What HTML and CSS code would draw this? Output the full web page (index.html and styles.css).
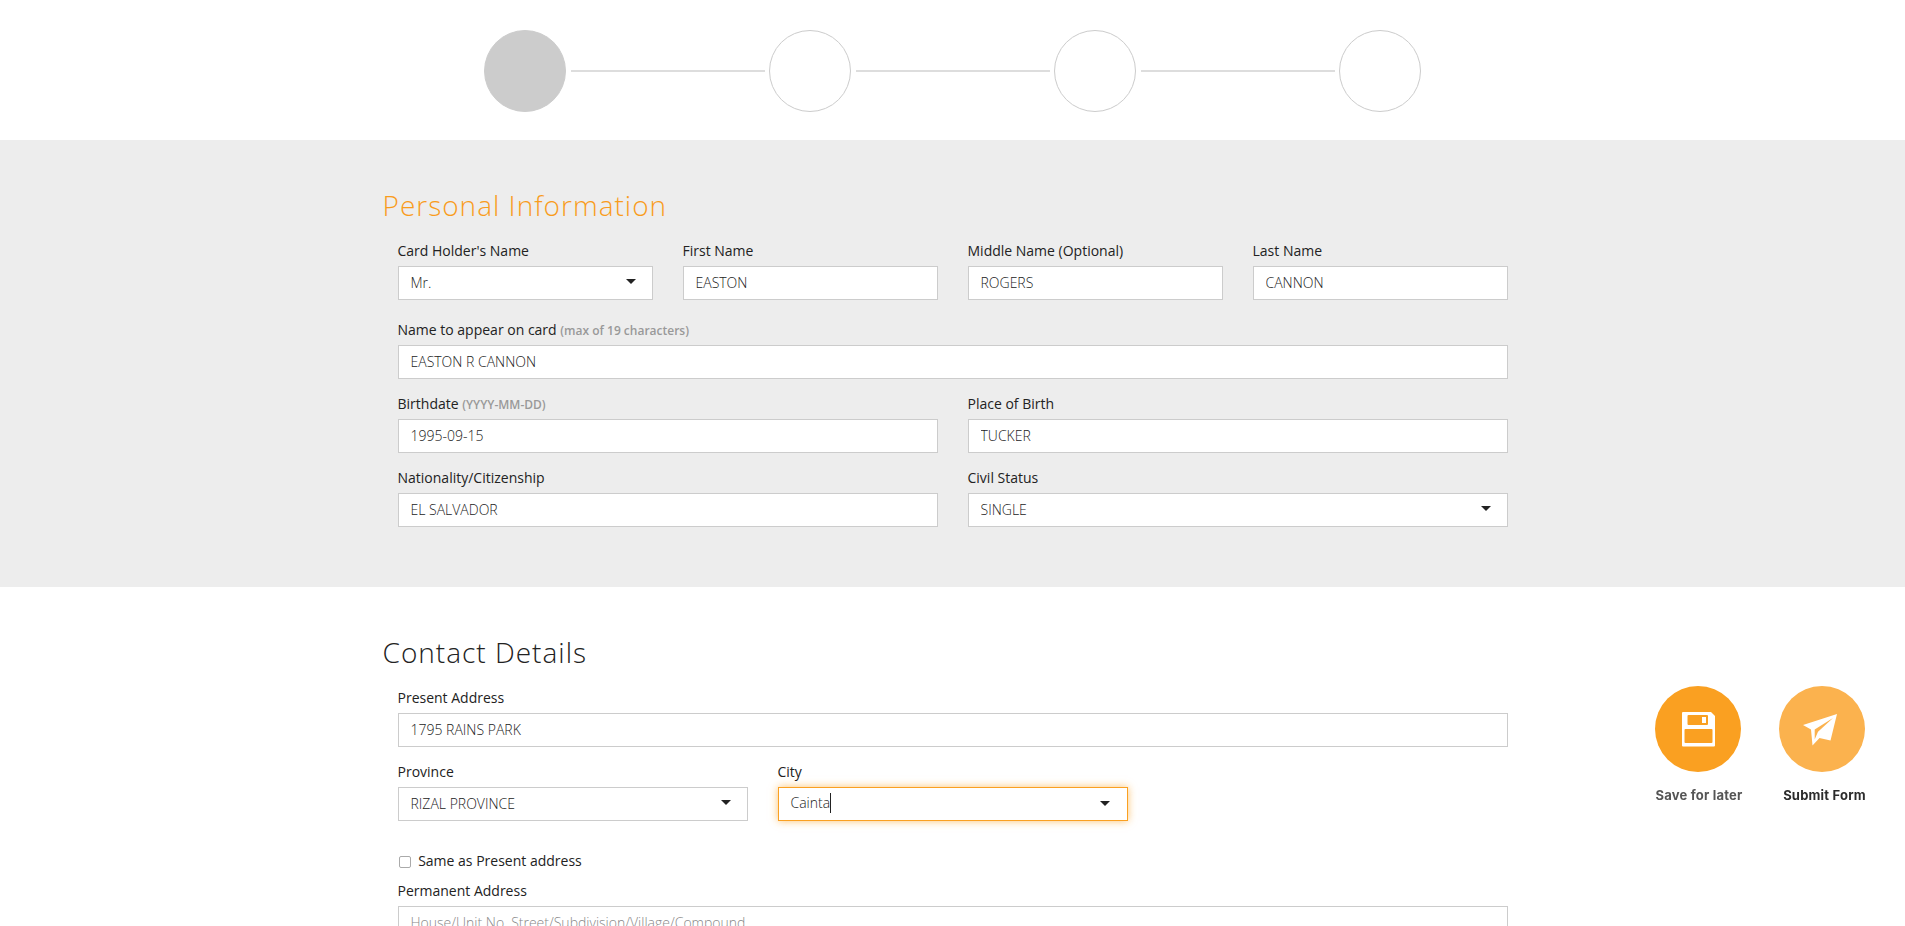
FILE: index.html
```html
<!DOCTYPE html>
<html lang="en">
<head>
  <meta charset="UTF-8">
  <meta name="viewport" content="width=device-width, initial-scale=1.0">
  <title>Card Application</title>
  <link rel="stylesheet" href="styles.css">
</head>
<body>
  <div class="stepper">
    <span class="step step-active"></span>
    <span class="step-line"></span>
    <span class="step"></span>
    <span class="step-line"></span>
    <span class="step"></span>
    <span class="step-line"></span>
    <span class="step"></span>
  </div>

  <section class="band band-grey">
    <div class="container">
      <h2 class="title title-orange">Personal Information</h2>
      <div class="row row-4">
        <div class="field">
          <label>Card Holder's Name</label>
          <div class="select"><select><option>Mr.</option></select></div>
        </div>
        <div class="field">
          <label>First Name</label>
          <input type="text" value="EASTON">
        </div>
        <div class="field">
          <label>Middle Name (Optional)</label>
          <input type="text" value="ROGERS">
        </div>
        <div class="field">
          <label>Last Name</label>
          <input type="text" value="CANNON">
        </div>
      </div>
      <div class="row row-name">
        <div class="field">
          <label>Name to appear on card <small>(max of 19 characters)</small></label>
          <input type="text" value="EASTON R CANNON">
        </div>
      </div>
      <div class="row row-2">
        <div class="field">
          <label>Birthdate <small>(YYYY-MM-DD)</small></label>
          <input type="text" value="1995-09-15">
        </div>
        <div class="field">
          <label>Place of Birth</label>
          <input type="text" value="TUCKER">
        </div>
      </div>
      <div class="row row-2">
        <div class="field">
          <label>Nationality/Citizenship</label>
          <input type="text" value="EL SALVADOR">
        </div>
        <div class="field">
          <label>Civil Status</label>
          <div class="select"><select><option>SINGLE</option></select></div>
        </div>
      </div>
    </div>
  </section>

  <section class="band band-white">
    <div class="container">
      <h2 class="title">Contact Details</h2>
      <div class="row">
        <div class="field">
          <label>Present Address</label>
          <input type="text" value="1795 RAINS PARK">
        </div>
      </div>
      <div class="row row-city">
        <div class="field">
          <label>Province</label>
          <div class="select"><select><option>RIZAL PROVINCE</option></select></div>
        </div>
        <div class="field">
          <label>City</label>
          <div class="select select-focus"><span class="typed">Cainta</span></div>
        </div>
      </div>
      <label class="check"><input type="checkbox"> Same as Present address</label>
      <div class="row">
        <div class="field">
          <label>Permanent Address</label>
          <input type="text" placeholder="House/Unit No. Street/Subdivision/Village/Compound">
        </div>
      </div>
    </div>
  </section>

  <div class="actions">
    <a class="action" href="#">
      <span class="action-circle">
        <svg width="33" height="35" viewBox="0 0 33 35">
          <path fill="#fff" fill-rule="evenodd" d="M1 0H29L33 4V33.500Q33 34.500 32 34.500H1Q0 34.500 0 33.500V1Q0 0 1 0ZM6.500 3Q5.500 3 5.500 4V12Q5.500 13 6.500 13H25Q26 13 26 12V4Q26 3 25 3ZM3.500 17Q2.500 17 2.500 18V30Q2.500 31 3.500 31H29.500Q30.500 31 30.500 30V18Q30.500 17 29.500 17ZM20 5H24V11H20Z"/>
        </svg>
      </span>
      <span class="action-label">Save for later</span>
    </a>
    <a class="action action-submit" href="#">
      <span class="action-circle">
        <svg class="icon-plane" width="35" height="32" viewBox="0 0 35 32">
          <path fill="#fff" fill-rule="evenodd" d="M34 0L0 11L8 15.500L9.500 31.500L16.500 24L27.500 26.500ZM30 4L11.700 15.500L11.700 25.500L15 17.700Z"/>
        </svg>
      </span>
      <span class="action-label">Submit Form</span>
    </a>
  </div>
</body>
</html>
```

FILE: styles.css
```css
html, body {
  margin: 0;
  padding: 0;
  height: 926px;
  overflow: hidden;
}

body {
  font-family: 'Open Sans', sans-serif;
  font-size: 14px;
  color: #222;
  background: #fff;
}

/* Stepper */
.stepper {
  height: 140px;
  padding-top: 30px;
  box-sizing: border-box;
  display: flex;
  justify-content: center;
  gap: 4px;
}

.step {
  width: 82px;
  height: 82px;
  box-sizing: border-box;
  border: 1px solid #ccc;
  border-radius: 50%;
}

.step-active {
  background: #ccc;
}

.step-line {
  width: 194px;
  height: 2px;
  margin-top: 40px;
  margin-left: 1px;
  background: #ddd;
}

/* Sections */
.band-grey {
  background: #ededed;
  height: 447px;
}

.band-white {
  background: #fff;
}

.container {
  width: 1140px;
  margin: 0 auto;
  box-sizing: border-box;
}

.title {
  margin: 0 0 8px;
  padding-top: 46px;
  font-size: 28px;
  font-weight: 300;
  line-height: 38px;
  letter-spacing: 1px;
  color: #222;
}

.title-orange {
  color: #f99c1c;
}

.row {
  display: grid;
  grid-template-columns: 1fr;
  gap: 30px;
  padding: 0 15px;
  margin-bottom: 6px;
}

.row-4 {
  grid-template-columns: repeat(4, 1fr);
  margin-bottom: 11px;
}

.row-2 {
  grid-template-columns: repeat(2, 1fr);
}

.row-city {
  grid-template-columns: 350px 350px;
}

.field label {
  display: block;
  height: 34px;
  box-sizing: border-box;
  padding-top: 4px;
  line-height: 30px;
  color: #222;
}

.field small {
  font-size: 12px;
  font-weight: 600;
  color: #999;
}

input[type="text"], select, .select-focus {
  display: block;
  width: 100%;
  height: 34px;
  box-sizing: border-box;
  padding: 0 12px 1px;
  border: 1px solid #ccc;
  border-radius: 0;
  background: #fff;
  font-family: 'Open Sans', sans-serif;
  font-size: 14px;
  font-weight: 300;
  line-height: 30px;
  color: #222;
  outline: none;
  appearance: none;
}

input::placeholder {
  color: #888;
}

.select {
  position: relative;
}

.select::after {
  content: "";
  position: absolute;
  right: 17px;
  top: 13px;
  border-top: 5px solid #222;
  border-left: 5px solid transparent;
  border-right: 5px solid transparent;
}

.select-focus {
  border-color: #faa021;
  box-shadow: 0 0 8px rgba(250, 160, 33, 0.65);
}

.typed {
  display: inline-block;
  height: 20px;
  line-height: 20px;
  margin-top: 5px;
  vertical-align: top;
  border-right: 1px solid #222;
}

.check {
  display: block;
  margin: 30px 15px 1px;
  line-height: 20px;
  font-size: 14px;
}

.check input {
  appearance: none;
  width: 12px;
  height: 12px;
  margin: 0 4px 0 1px;
  vertical-align: -2px;
  border: 1px solid #aaa;
  border-radius: 2px;
  background: #fff;
}

/* Floating actions */
.actions {
  position: fixed;
  left: 1645px;
  top: 686px;
  display: flex;
  gap: 18px;
}

.action {
  width: 106px;
  display: flex;
  flex-direction: column;
  align-items: center;
  text-decoration: none;
  color: #555;
}

.action-circle {
  width: 86px;
  height: 86px;
  border-radius: 50%;
  background: #faa021;
  display: flex;
  align-items: center;
  justify-content: center;
}

.action-submit {
  color: #2b2b2b;
}

.action-submit .action-circle {
  background: #fbb24e;
}

.icon-plane {
  margin-right: 3px;
  margin-top: 2px;
}

.action-label {
  margin-top: 14px;
  padding-left: 2px;
  font-family: 'Inter', sans-serif;
  font-size: 13px;
  font-weight: 700;
  line-height: 18px;
  letter-spacing: 0.2px;
  white-space: nowrap;
}

.action-submit .action-label {
  padding-left: 5px;
}
```
